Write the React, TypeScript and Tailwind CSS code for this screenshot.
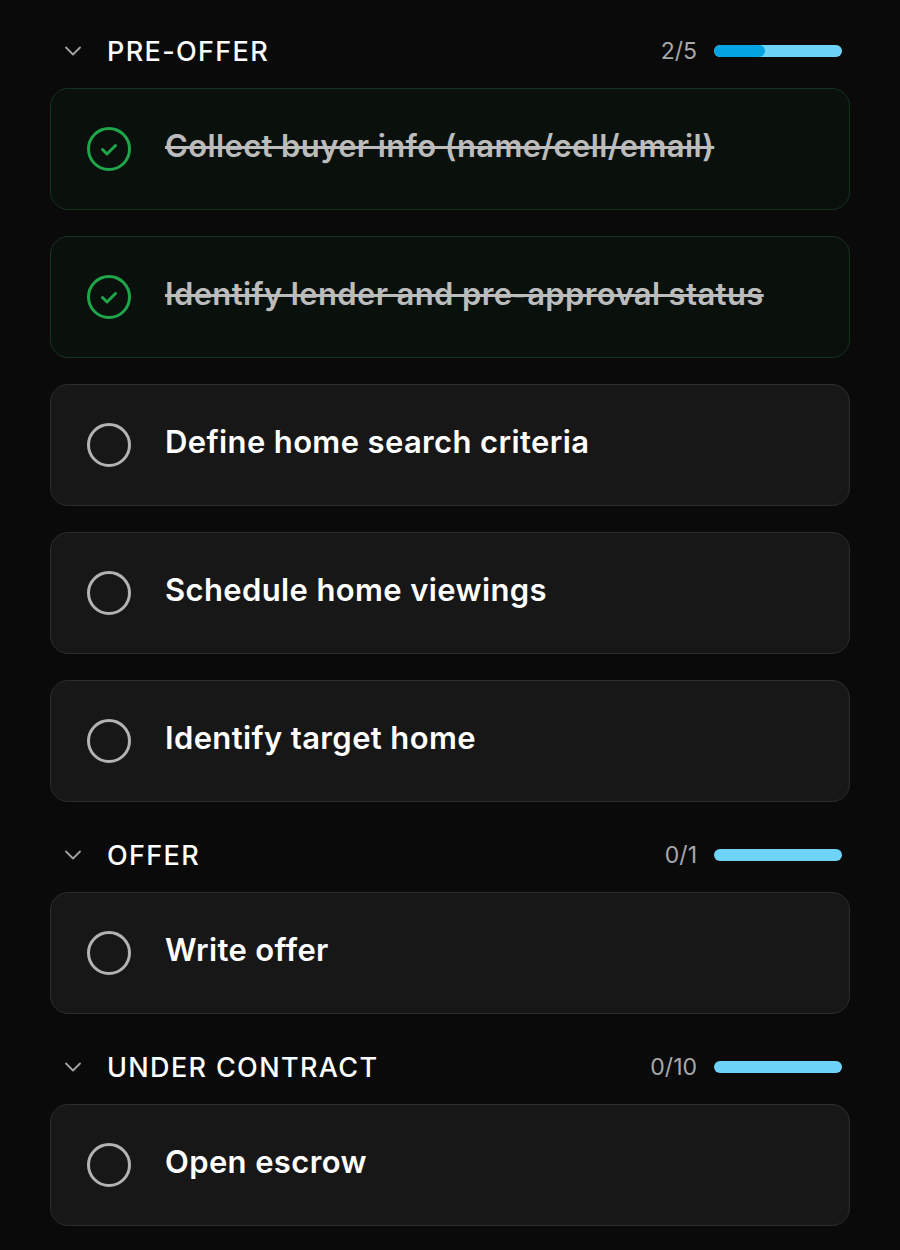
import React from "react";

type Task = { label: string; done: boolean };
type Section = { title: string; tasks: Task[]; total: number };

const sections: Section[] = [
  {
    title: "PRE-OFFER",
    total: 5,
    tasks: [
      { label: "Collect buyer info (name/cell/email)", done: true },
      { label: "Identify lender and pre-approval status", done: true },
      { label: "Define home search criteria", done: false },
      { label: "Schedule home viewings", done: false },
      { label: "Identify target home", done: false },
    ],
  },
  { title: "OFFER", total: 1, tasks: [{ label: "Write offer", done: false }] },
  { title: "UNDER CONTRACT", total: 10, tasks: [{ label: "Open escrow", done: false }] },
];

function Chevron() {
  return (
    <svg width="20" height="12" viewBox="0 0 20 12" fill="none" className="shrink-0">
      <path d="M3 2.5 L10 9.5 L17 2.5" stroke="#a3a3a3" strokeWidth="1.8" strokeLinecap="round" strokeLinejoin="round" />
    </svg>
  );
}

function CheckCircle() {
  return (
    <svg width="46" height="46" viewBox="0 0 46 46" fill="none" className="shrink-0">
      <circle cx="23" cy="23" r="20.5" stroke="#1fa64b" strokeWidth="3" />
      <path d="M16.5 23.5 L21 28 L29.5 19.5" stroke="#1fa64b" strokeWidth="3" strokeLinecap="round" strokeLinejoin="round" />
    </svg>
  );
}

function EmptyCircle() {
  return (
    <svg width="46" height="46" viewBox="0 0 46 46" fill="none" className="shrink-0">
      <circle cx="23" cy="23" r="20.5" stroke="#b3b3b3" strokeWidth="3" />
    </svg>
  );
}

function SectionView({ s }: { s: Section }) {
  const done = s.tasks.filter((t) => t.done).length;
  const pct = (done / s.total) * 100;
  return (
    <div className="flex flex-col">
      <div className="flex h-[36px] items-center mb-[19px] pl-[63px] pr-[58px]">
        <Chevron />
        <div className="ml-[24px] text-[27px] font-medium tracking-[0.05em] text-white leading-none">{s.title}</div>
        <div className="ml-auto text-[23px] text-[#a8a8a8] leading-none">
          {done}/{s.total}
        </div>
        <div className="ml-[17px] h-[12px] w-[128px] rounded-full bg-[#6dd3f8] overflow-hidden">
          <div className="h-full rounded-full bg-[#03a3e3]" style={{ width: `${pct}%` }} />
        </div>
      </div>
      <div className="flex flex-col gap-[26px] px-[50px]">
        {s.tasks.map((t) => (
          <div
            key={t.label}
            className={
              t.done
                ? "flex h-[122px] items-center rounded-[18px] border-[1.5px] border-[#15331f] bg-[#0a110d] pl-[35px]"
                : "flex h-[122px] items-center rounded-[18px] border-[1.5px] border-[#2d2d2d] bg-[#171717] pl-[35px]"
            }
          >
            {t.done ? <CheckCircle /> : <EmptyCircle />}
            <div
              className={
                t.done
                  ? "ml-[33px] mb-[5px] text-[31px] font-semibold tracking-[0.012em] text-[#bcbcbc] line-through decoration-[2.5px]"
                  : "ml-[33px] mb-[5px] text-[31px] font-semibold tracking-[0.012em] text-white"
              }
            >
              {t.label}
            </div>
          </div>
        ))}
      </div>
    </div>
  );
}

export default function App() {
  return (
    <div
      className="min-h-[1250px] w-[900px] bg-[#0a0a0a] pt-[33px] flex flex-col gap-[35px]"
      style={{ fontFamily: "Inter, 'Noto Sans', sans-serif" }}
    >
      {sections.map((s) => (
        <SectionView key={s.title} s={s} />
      ))}
    </div>
  );
}
